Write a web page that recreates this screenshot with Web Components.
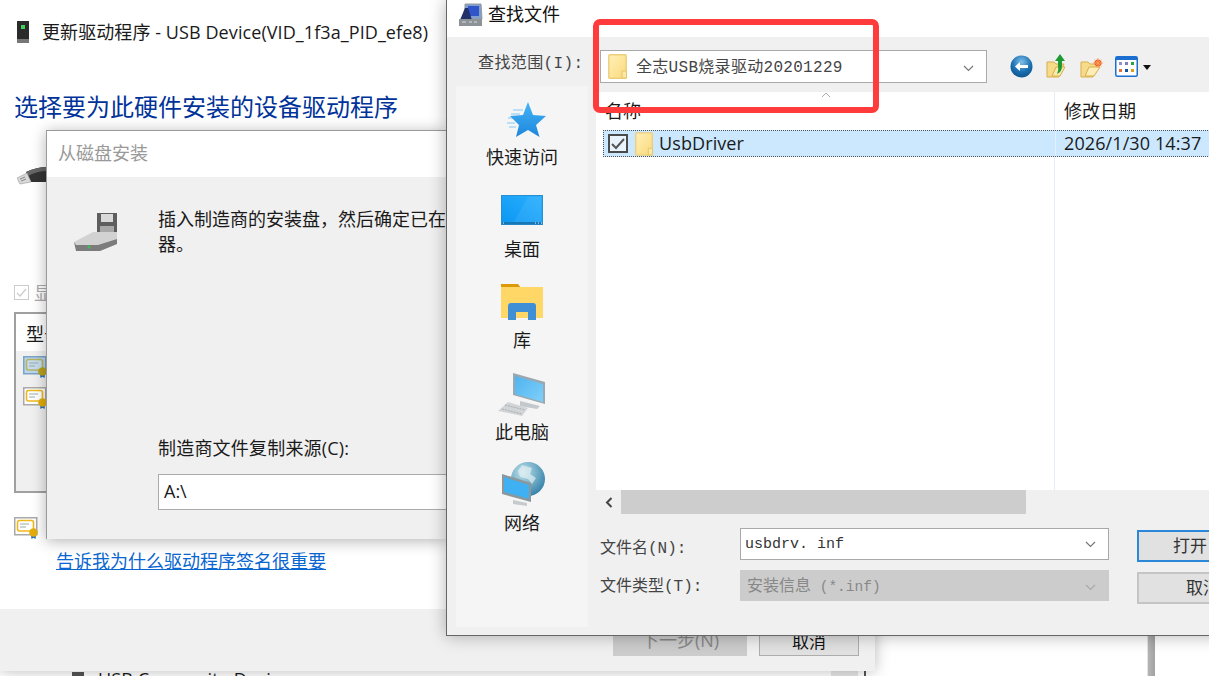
<!DOCTYPE html>
<html lang="zh-CN">
<head>
<meta charset="utf-8">
<title>查找文件</title>
<style>
html,body{margin:0;padding:0;width:1209px;height:676px;overflow:hidden;background:#fff}
body{position:relative;font-family:"Open Sans","Noto Sans CJK SC",sans-serif;color:#1a1a1a}
</style>
</head>
<body>
<x-backdrop>USB Composite Device</x-backdrop>
<x-wizard>
  <svg slot="icon" width="12" height="22" viewBox="0 0 12 22"><rect x="0" y="0" width="12" height="19" fill="#2b2b2b"/><rect x="4" y="4" width="4" height="4" fill="#3fd35a"/><rect x="0" y="18" width="12" height="4" fill="#777"/></svg>
</x-wizard>
<x-disk-dialog></x-disk-dialog>
<x-find-dialog></x-find-dialog>
<x-highlight></x-highlight>

<script>
const MONO='"Liberation Mono","Noto Sans CJK SC",monospace';
function def(name,css,html){
  customElements.define(name,class extends HTMLElement{
    constructor(){super();const r=this.attachShadow({mode:'open'});
      r.innerHTML='<style>'+css+'</style>'+html;}
  });
}
const chevron=c=>`<svg width="11" height="7" viewBox="0 0 11 7"><path d="M1 1l4.5 4.5L10 1" fill="none" stroke="${c}" stroke-width="1.2"/></svg>`;
const folder=`<svg width="20" height="25" viewBox="0 0 20 25"><defs><linearGradient id="fg" x1="0" y1="0" x2="1" y2="1"><stop offset="0" stop-color="#fff0b8"/><stop offset="1" stop-color="#fbd97c"/></linearGradient></defs><rect x=".8" y=".8" width="17.4" height="23.4" rx="1" fill="url(#fg)" stroke="#ecce7a" stroke-width="1.4"/><path d="M14 24v-7h4.5v7z" fill="#fbe7a6" stroke="#e7c565"/></svg>`;
const cert=(hi)=>`<svg width="25" height="22" viewBox="0 0 25 22"><rect x=".75" y=".75" width="22" height="17" fill="${hi?'#b9d5ec':'#fff'}" stroke="${hi?'#7da4c4':'#a9a9a9'}" stroke-width="1.5"/><rect x="3.5" y="3.5" width="16" height="10.5" rx="2" fill="${hi?'#c6dcec':'#fff'}" stroke="${hi?'#b5b565':'#eeb91c'}" stroke-width="1.6"/><path d="M6 7h9M6 10h6" stroke="#9aa" stroke-width="1.2"/><path d="M17 18l.5 4 2-1.3 2 1.3.5-4z" fill="#1c6fc4"/><circle cx="19.5" cy="15.5" r="4.3" fill="${hi?'#b9a21c':'#e3ad0c'}"/></svg>`;

def('x-backdrop',`
:host{position:absolute;inset:0;display:grid;grid-template-columns:831px 27px 6px 2px 281px 1px 7px 1fr;background:#fff;overflow:hidden}
.tree{display:flex;align-items:flex-start;gap:14px;padding:667px 0 0 72px;font:18px/24px "Open Sans",sans-serif;color:#1a1a1a;white-space:nowrap;letter-spacing:.1px}
.tree i{display:block;width:12px;height:14px;background:#555;margin-top:5px;flex:none}
.s{background:#e6e6e6}.l{background:#555}.b1{background:#e4e4e4}.b2{background:linear-gradient(90deg,#b5b5b5,#a2a2a2)}
`,`<div class="tree"><i></i><slot></slot></div><div class="s"></div><div></div><div class="l"></div><div></div><div class="b1"></div><div class="b2"></div><div></div>`);

def('x-wizard',`
:host{position:absolute;left:0;top:0;width:875px;height:671px;display:flex;flex-direction:column;background:#fff;box-shadow:0 0 14px rgba(0,0,0,.28);font:18px/24px "Open Sans","Noto Sans CJK SC",sans-serif;color:#1a1a1a}
.title{display:flex;align-items:center;gap:14px;padding:20px 0 0 17px;height:24px;white-space:nowrap;letter-spacing:.08px}
.title span{margin-left:-1px}
h1{margin:45px 0 0 14px;font:400 24px/34px "Noto Sans CJK SC",sans-serif;color:#003399;height:34px;white-space:nowrap}
.usb{margin:44px 0 0 17px;height:18px;display:block}
.chk{display:flex;align-items:center;gap:5px;margin:100px 0 0 14px;height:15px;color:#aaa}
.chk i{width:13px;height:13px;border:1px solid #ccc;display:flex;align-items:center;justify-content:center;flex:none}
.list{margin:12px 0 0 14px;width:500px;height:177px;border:2px solid #a0a0a0;background:#f0f0f0;box-sizing:content-box;display:flex;flex-direction:column}
.head{height:37px;background:#fff;padding-left:10px;line-height:40px;flex:none;margin-bottom:5px}
.ci{padding:0 0 9px 7px;height:22px;flex:none}
.certrow{margin:24px 0 0 14px;height:22px}
a{display:block;margin:10px 0 0 56px;color:#0a66d0;text-decoration:underline;width:max-content}
.foot{margin-top:auto;height:62px;background:#f0f0f0;display:flex;justify-content:flex-end;gap:12px;padding:18px 16px 15px 0;box-sizing:border-box}
.btn{width:134px;height:29px;background:#ccc;color:#888;text-align:center;box-sizing:border-box;line-height:27px}
.btn.c{width:100px;background:#e1e1e1;border:1px solid #adadad;color:#111;font-size:17px}
`,`<div class="title"><slot name="icon"></slot><span>更新驱动程序 - USB Device(VID_1f3a_PID_efe8)</span></div>
<h1>选择要为此硬件安装的设备驱动程序</h1>
<svg class="usb" width="30" height="18" viewBox="0 0 30 18"><path d="M9 5Q20 0 30 0v15H14z" fill="#333"/><path d="M9 5Q20 0 30 0v4Q20 4 11 9z" fill="#666"/><path d="M0 11l10-5 4 9-11 2z" fill="#d8d8d8" stroke="#999" stroke-width=".6"/><path d="M3 12l5-2M4 14l5-2" stroke="#888"/></svg>
<div class="chk"><i><svg width="11" height="9" viewBox="0 0 11 9"><path d="M1 5l3 3 6-7" fill="none" stroke="#ccc" stroke-width="1.2"/></svg></i><span>显示兼容硬件</span></div>
<div class="list"><div class="head">型号</div><div class="ci">${cert(true)}</div><div class="ci">${cert(false)}</div></div>
<div class="certrow">${cert(false)}</div>
<a>告诉我为什么驱动程序签名很重要</a>
<div class="foot"><div class="btn">下一步(N)</div><div class="btn c">取消</div></div>`);

def('x-disk-dialog',`
:host{position:absolute;left:46px;top:130px;width:401px;height:409px;overflow:hidden;box-sizing:border-box;border:1px solid #9a9a9a;border-bottom:0;border-right:0;display:flex;flex-direction:column;background:#f0f0f0;box-shadow:0 2px 14px rgba(0,0,0,.3);font:18px/26px "Open Sans","Noto Sans CJK SC",sans-serif;color:#1a1a1a}
.t{height:46px;background:#fff;padding-left:11px;line-height:45px;color:#999;flex:none}
.body{display:flex;flex:1;padding:34px 0 29px 26px;min-height:0}
.ic{width:85px;flex:none;padding-top:1px}
.col{flex:1;display:flex;flex-direction:column;min-width:0}
.msg{white-space:normal;width:470px;line-height:25px;margin-top:-4px}
.lbl{margin-top:auto;line-height:26px;letter-spacing:.2px}
.inp{margin-top:13px;height:36px;box-sizing:border-box;border:1px solid #aaa;border-right:0;background:#fff;padding-left:5px;line-height:33px}
`,`<div class="t">从磁盘安装</div>
<div class="body"><div class="ic"><svg width="46" height="40" viewBox="0 0 46 40"><rect x="24" y="1" width="20" height="21" fill="#5e5e5e"/><rect x="28" y="2" width="12" height="8" fill="#d9d9d9"/><rect x="27" y="14" width="14" height="8" fill="#a8a8a8"/><path d="M1 30L20 20h24v12L27 39H4z" fill="#d2d2d2"/><path d="M1 30l2 9h24l17-7v-5L25 33H3z" fill="#7c7c7c"/><circle cx="16" cy="35" r="1.5" fill="#3fbf4f"/></svg></div>
<div class="col"><div class="msg">插入制造商的安装盘，然后确定已在下面选定了正确的驱动器。</div><div class="lbl">制造商文件复制来源(C):</div><div class="inp">A:\\</div></div></div>`);

def('x-place',`
:host{display:flex;flex-direction:column;align-items:center;height:91.5px;font:18px/26px "Noto Sans CJK SC",sans-serif;color:#1a1a1a}
.i{height:42px;width:60px;flex:none}
::slotted(svg){display:block;overflow:visible}
`,`<div class="i"><slot name="icon"></slot></div><slot></slot>`);

def('x-combo',`
:host{display:flex;align-items:center;box-sizing:border-box;background:var(--bg,#fff);border:var(--bw,1px) solid var(--bc,#a9a9a9);padding:0 12px 0 var(--pl,7px);font:var(--f,15px/28px "Liberation Mono","Noto Sans CJK SC",monospace);color:var(--fg,#444);white-space:nowrap;gap:8px}
.t{flex:1;min-width:0;display:flex;align-items:center;gap:8px}
`,`<div class="t"><slot></slot></div><slot name="chev"></slot>`);

def('x-button',`
:host{display:block;width:100px;box-sizing:border-box;height:var(--h,32px);background:#e1e1e1;border:2px solid var(--bc,#c4c4c4);font:17px/25px "Noto Sans CJK SC",sans-serif;color:#333;padding-left:var(--pl,34px);white-space:nowrap}
`,`<slot></slot>`);

def('x-highlight',`
:host{position:absolute;left:593px;top:19px;width:286px;height:94px;box-sizing:border-box;border:6px solid #ff3b3b;border-radius:7px;pointer-events:none}
`,``);

def('x-find-dialog',`
:host{position:absolute;left:446px;top:0;width:790px;height:636px;box-sizing:border-box;border-left:1px solid #666;border-bottom:1px solid #666;display:flex;flex-direction:column;background:#f0f0f0;box-shadow:0 0 16px rgba(0,0,0,.3);font:16px/24px ${MONO};color:#444}
.tb{height:37px;flex:none;background:#fff;display:flex;align-items:center;gap:5px;padding:0 0 11px 12px;box-sizing:border-box;font:18px/26px "Noto Sans CJK SC",sans-serif;color:#111}
.tb svg{margin-top:3px}
.main{flex:1;display:grid;grid-template-columns:149px 1fr;min-height:0}
.left{display:flex;flex-direction:column}
.look{height:49px;flex:none;padding:14px 0 0 31px;box-sizing:border-box;white-space:nowrap;letter-spacing:.4px;line-height:26px}
.side{margin:0 0 8px 9px;width:132px;flex:1;background:#f5f5f5;padding-top:15px;box-sizing:border-box}
.right{display:flex;flex-direction:column;min-width:0}
.tools{height:55px;flex:none;display:flex;align-items:flex-start;padding:13px 0 0 4px;box-sizing:border-box}
.tools svg{display:block;flex:none}
x-combo.top{width:387px;height:33px;font-size:16px}
.top span{letter-spacing:.3px;padding-top:3px}
.list{height:398px;flex:none;background:#fff linear-gradient(#e6eef5,#e6eef5) 458px 0/1px 100% no-repeat;display:flex;flex-direction:column}
.cols{height:38px;display:grid;grid-template-columns:458px 1fr;font:18px/36px "Noto Sans CJK SC",sans-serif;color:#1a1a1a;flex:none}
.cols div{padding-left:10px;position:relative}
.cols div:first-child{padding-left:9px}
.cols svg{position:absolute;left:225px;top:0}
.row{height:27px;margin-left:7px;box-sizing:border-box;background:#cce8ff linear-gradient(#e4f1fb,#e4f1fb) 451px 0/1px 100% no-repeat;border:1px dotted #555;display:grid;grid-template-columns:451px 1fr;font:18px/25px "Open Sans","Noto Sans CJK SC",sans-serif;color:#1a1a1a;flex:none}
.name{display:flex;align-items:center;gap:6px;padding-left:4px}
.name svg{flex:none}
.name span:last-child{margin-left:-1px;letter-spacing:.1px}
.cb{width:20px;height:19px;box-sizing:border-box;border:2px solid #4a4a4a;background:#e8f3fb;display:flex;align-items:center;justify-content:center;margin-right:1px}
.date{padding-left:9px;white-space:nowrap;letter-spacing:.1px}
.sb{height:24px;flex:none;display:flex;align-items:center}
.sb .a{width:25px;display:flex;justify-content:center;flex:none}
.sb .th{width:405px;height:24px;background:#cdcdcd}
.form{display:grid;grid-template-columns:140px 369px 100px;grid-template-rows:32px 32px;column-gap:0;row-gap:10px;padding:14px 0 0 4px;align-items:start}
.form label{line-height:30px;white-space:nowrap;margin-top:2px}
.form label.first{margin-top:6px}
.form x-combo{height:32px}
.form x-combo span{padding-top:2px}
.form .b{margin-left:28px;margin-top:2px;width:100px}
.inp{--bc:#a9a9a9;--pl:4px;--f:15px/28px "Liberation Mono","Noto Sans CJK SC",monospace;--fg:#333;--bw:1px}
.dis{--bg:#cccccc;--bc:#cccccc;--pl:6px;--fg:#888;--f:16px/28px "Liberation Mono","Noto Sans CJK SC",monospace;height:31px!important}
.dis .s{font-size:14.5px;padding:0}
`,`<div class="tb"><svg width="24" height="23" viewBox="0 0 24 23"><path d="M6 1l16 0 1 15-17 0z" fill="#7f9fd0" stroke="#999"/><path d="M9 3l11 0 0 10-11 0z" fill="#2f55c8"/><path d="M6 5L1 17h12L9 5z" fill="#22306a"/><rect x="0" y="16" width="23" height="7" fill="#8c9296"/><path d="M3 19h4M10 19h3M15 19h3" stroke="#dcdcdc"/></svg><span>查找文件</span></div>
<div class="main">
<div class="left">
  <div class="look">查找范围(I):</div>
  <div class="side">
    <x-place><svg slot="icon" width="60" height="42" viewBox="0 0 60 42"><defs><linearGradient id="st" x1="0" y1="0" x2="0" y2="1"><stop offset="0" stop-color="#45b4f6"/><stop offset="1" stop-color="#1d86dc"/></linearGradient></defs><path d="M21 9h10M19 13h9M16 17h8M15 22h8M17 26h7" stroke="#a9d8f6" stroke-width="1.6"/><path d="M36 1l5 13 13 1-10 9 3.5 12L36 29l-12 7 3-12-9-9 13-1z" fill="url(#st)"/></svg>快速访问</x-place>
    <x-place><svg slot="icon" width="60" height="42" viewBox="0 0 60 42"><defs><linearGradient id="ds" x1="0" y1="1" x2="1" y2="0"><stop offset="0" stop-color="#0a96f2"/><stop offset="1" stop-color="#2bb0ff"/></linearGradient></defs><rect x="9.5" y="2.5" width="41" height="29" fill="url(#ds)" stroke="#2a8fd0"/><path d="M22 29l14-25h13v25z" fill="#fff" opacity=".07"/><rect x="10" y="29" width="40" height="2.4" fill="#1976b4"/><path d="M11 30h1M43 30h1M46 30h1M49 30h1" stroke="#dff" stroke-width="1"/></svg>桌面</x-place>
    <x-place><svg slot="icon" width="60" height="42" viewBox="0 0 60 42"><path d="M9 0h17l3 4v5H9z" fill="#dd9a06"/><rect x="9" y="3" width="42" height="31" fill="#ffd767"/><path d="M16 36V22q0-3 3-3h22q3 0 3 3v14H36v-8H24v8z" fill="#3f8fd6"/></svg>库</x-place>
    <x-place><svg slot="icon" width="60" height="42" viewBox="0 0 60 42"><defs><linearGradient id="pc" x1="0" y1="0" x2="1" y2="1"><stop offset="0" stop-color="#4fb3ef"/><stop offset="1" stop-color="#7fd0fa"/></linearGradient></defs><path d="M21 -3l32 9v22l-32-9z" fill="#9aa8b0"/><path d="M23 0l28 8v18l-28-8z" fill="url(#pc)"/><path d="M28 25l20 5-3 3-17-3z" fill="#c2c8cc"/><path d="M16 26l20 6-6 8-24-5z" fill="#d2d5d7"/><path d="M13 29l20 5M10 33l20 5" stroke="#a9adb0" stroke-dasharray="2 1"/></svg>此电脑</x-place>
    <x-place><svg slot="icon" width="60" height="42" viewBox="0 0 60 42"><defs><radialGradient id="gl" cx=".35" cy=".3" r=".8"><stop offset="0" stop-color="#bfe1ea"/><stop offset="1" stop-color="#2c7ca6"/></radialGradient></defs><circle cx="36" cy="12" r="17" fill="url(#gl)"/><path d="M30 -2l10 3-2 6 6 4-4 6-4-5-8-2-2-6z" fill="#e8f3f5" opacity=".65"/><path d="M10 7l29 9v19l-29-8z" fill="#8c979c"/><path d="M12 10l25 8v14l-25-7z" fill="#3fb0f2"/><path d="M21 33l14 3v3l-14-2z" fill="#c6cacd"/></svg>网络</x-place>
  </div>
</div>
<div class="right">
  <div class="tools">
    <x-combo class="top">${folder}<span>全志USB烧录驱动20201229</span><span slot="chev">${chevron('#777')}</span></x-combo>
    <svg style="margin-left:23px;margin-top:5px" width="23" height="23" viewBox="0 0 23 23"><defs><radialGradient id="bk" cx=".5" cy=".3" r=".8"><stop offset="0" stop-color="#7fc0ea"/><stop offset=".55" stop-color="#1a6fb0"/><stop offset="1" stop-color="#0b4d86"/></radialGradient></defs><circle cx="11.5" cy="11.5" r="11" fill="url(#bk)"/><path d="M5 11.5l5-4.5v3h8v3h-8v3z" fill="#fff"/></svg>
    <svg style="margin-left:13px;margin-top:4px" width="20" height="24" viewBox="0 0 20 24"><path d="M1 8h7l2 2h8l-5 13H1z" fill="#f6dc8a" stroke="#d7ae4a"/><path d="M6 22l4-9h9l-5 9z" fill="#fbeaae" stroke="#d7ae4a"/><path d="M14 0l5 7h-3v5q0 6-5 8 2-4 1-8v-5H9z" fill="#1f9a33"/></svg>
    <svg style="margin-left:14px;margin-top:8px" width="23" height="20" viewBox="0 0 23 20"><path d="M1 4h7l2 2h7l-4 13H1z" fill="#f6dc8a" stroke="#d7ae4a"/><path d="M5 18l4-9h11l-6 9z" fill="#fdeeb8" stroke="#d7ae4a"/><circle cx="18" cy="5" r="3.6" fill="#f0602a"/><path d="M18 0v10M13 5h10M14.5 1.5l7 7M21.5 1.5l-7 7" stroke="#f9a05a" stroke-width=".9"/></svg>
    <svg style="margin-left:12px;margin-top:6px" width="23" height="21" viewBox="0 0 23 21"><rect x=".75" y=".75" width="21.5" height="19.5" rx="1.5" fill="#fff" stroke="#1a6fd0" stroke-width="1.5"/><rect x="1" y="1" width="21" height="3" fill="#1a6fd0"/><rect x="4" y="6" width="3" height="3" fill="#8f8fd0"/><rect x="10" y="6" width="3" height="3" fill="#7f7fc0"/><rect x="16" y="6" width="3" height="3" fill="#2aa04a"/><rect x="4" y="13" width="3" height="3" fill="#e8703a"/><rect x="10" y="13" width="3" height="3" fill="#1a4fa0"/><rect x="16" y="13" width="3" height="3" fill="#d8a020"/></svg>
    <svg style="margin-left:5px;margin-top:15px" width="8" height="5" viewBox="0 0 8 5"><path d="M0 0h8L4 5z" fill="#111"/></svg>
  </div>
  <div class="list">
    <div class="cols"><div>名称<svg width="10" height="6" viewBox="0 0 10 6"><path d="M1 5l4-4 4 4" fill="none" stroke="#aaa"/></svg></div><div>修改日期</div></div>
    <div class="row"><div class="name"><span class="cb"><svg width="14" height="12" viewBox="0 0 14 12"><path d="M1 6l4 4 8-9" fill="none" stroke="#555" stroke-width="2"/></svg></span>${folder.replace('width="20" height="25"','width="19" height="24"').replace(/fg/g,'fg2')}<span>UsbDriver</span></div><div class="date">2026/1/30 14:37</div></div>
  </div>
  <div class="sb"><div class="a"><svg width="8" height="11" viewBox="0 0 8 11"><path d="M6.5 1L2 5.5 6.5 10" fill="none" stroke="#444" stroke-width="2"/></svg></div><div class="th"></div></div>
  <div class="form">
    <label class="first">文件名(N):</label><x-combo class="inp"><span>usbdrv. inf</span><span slot="chev">${chevron('#777')}</span></x-combo><x-button class="b" style="--bc:#2b88d8">打开</x-button>
    <label>文件类型(T):</label><x-combo class="dis"><span>安装信息<span class="s"> (*.inf)</span></span><span slot="chev">${chevron('#aaa')}</span></x-combo><x-button class="b" style="--pl:47px">取消</x-button>
  </div>
</div>
</div>`);
</script>
</body>
</html>
